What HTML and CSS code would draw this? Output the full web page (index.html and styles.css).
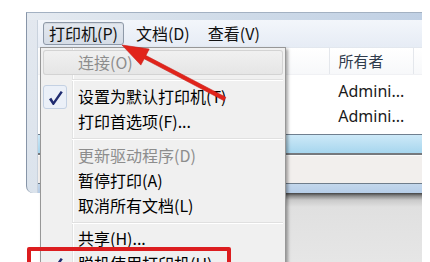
FILE: index.html
```html
<!DOCTYPE html>
<html lang="zh-CN">
<head>
<meta charset="utf-8">
<title>打印机</title>
<link rel="stylesheet" href="styles.css">
</head>
<body>
<div class="stage">
  <div class="window">
    <div class="client">
      <div class="menubar">
        <span class="mb-item active">打印机(P)</span>
        <span class="mb-item">文档(D)</span>
        <span class="mb-item">查看(V)</span>
      </div>
      <div class="list">
        <div class="lhead">
          <div class="col c1"></div>
          <div class="col c2"><span class="peek"></span></div>
          <div class="col c3">所有者</div>
          <div class="col c4"></div>
        </div>
        <div class="lbody">
          <div class="lrow">
            <div class="col c1"></div>
            <div class="col c2"></div>
            <div class="col c3">Admini...</div>
            <div class="col c4"></div>
          </div>
          <div class="lrow">
            <div class="col c1"></div>
            <div class="col c2"></div>
            <div class="col c3">Admini...</div>
            <div class="col c4"></div>
          </div>
        </div>
      </div>
      <div class="bands">
        <div class="b1"></div>
        <div class="b2"></div>
        <div class="b3"></div>
        <div class="b4"></div>
        <div class="b5"></div>
        <div class="b6"></div>
        <div class="b7"></div>
      </div>
    </div>
  </div>
  <div class="desk"></div>

  <div class="menu">
    <div class="mi hover disabled"><span class="mi-icon"></span><span class="mi-text">连接(O)</span></div>
    <div class="msep"></div>
    <div class="mi"><span class="mi-icon checked"><svg viewBox="0 0 22 22" width="22" height="22"><path d="M5 13.2 L7.3 11.8 L9.5 15.4 L16.7 5 L18.8 6.3 L9.9 19 L8.8 19 Z" fill="#1f2b70"/></svg></span><span class="mi-text">设置为默认打印机(T)</span></div>
    <div class="mi"><span class="mi-icon"></span><span class="mi-text">打印首选项(F)...</span></div>
    <div class="msep"></div>
    <div class="mi disabled"><span class="mi-icon"></span><span class="mi-text">更新驱动程序(D)</span></div>
    <div class="mi"><span class="mi-icon"></span><span class="mi-text">暂停打印(A)</span></div>
    <div class="mi"><span class="mi-icon"></span><span class="mi-text">取消所有文档(L)</span></div>
    <div class="msep short"></div>
    <div class="mi"><span class="mi-icon"></span><span class="mi-text">共享(H)...</span></div>
    <div class="mi"><span class="mi-icon plain"><svg viewBox="0 0 22 22" width="22" height="22"><path d="M5 13.2 L7.3 11.8 L9.5 15.4 L16.7 5 L18.8 6.3 L9.9 19 L8.8 19 Z" fill="#1f2b70"/></svg></span><span class="mi-text">脱机使用打印机(U)</span></div>
  </div>

  <div class="redbox"></div>

  <svg class="arrow" viewBox="0 0 430 262" width="430" height="262">
    <polygon points="122,45 149.2,49.1 145.9,55.5 225.8,97.2 224.2,100.8 144.2,58.8 140.8,65.1" fill="#e1241b" stroke="#c81a14" stroke-width="0.6" stroke-linejoin="round"/>
  </svg>
</div>
</body>
</html>
```

FILE: styles.css
```css
* {
  box-sizing: border-box;
}

html,
body {
  margin: 0;
  padding: 0;
  background: #fff;
}

body {
  font-family: "Noto Sans CJK SC", "Noto Sans", sans-serif;
  font-size: 16px;
  color: #000;
}

.stage {
  position: relative;
  width: 430px;
  height: 262px;
  overflow: hidden;
  background: #fff;
  padding-top: 12px;
}

/* window frame */
.window {
  margin-left: 26px;
  width: 396px;
  height: 181px;
  border-left: 1px solid #8795a8;
  border-top: 1px solid #a3b1c2;
  border-bottom-left-radius: 7px;
  background:
    linear-gradient(90deg, #e6ebf1 0, #d2dde9 45%, #c0d0e4 100%) top / 100% 7px no-repeat,
    linear-gradient(#e3e8ef, #dbe3ec);
  padding: 7px 0 0 10px;
  overflow: hidden;
}

.client {
  height: 173px;
  background: #fff;
  display: flex;
  flex-direction: column;
  border-left: 1px solid #c9d2dd;
}

.menubar {
  height: 28px;
  flex-shrink: 0;
  display: flex;
  align-items: center;
  gap: 6px;
  padding-left: 5px;
  background: linear-gradient(#f3f6fb, #e6ecf5);
  border-bottom: 1px solid #e2e7ee;
}

.mb-item {
  height: 23px;
  line-height: 21px;
  padding: 0 5px;
  border: 1px solid transparent;
  border-radius: 3px;
  color: #111;
  white-space: nowrap;
}

.mb-item.active {
  background: linear-gradient(#e4e9f0, #d5dce6);
  border-color: #8e99a8;
  box-shadow: inset 0 1px 1px rgba(0, 0, 0, 0.08);
}

/* list view */
.list {
  flex: 1;
  display: flex;
  flex-direction: column;
}

.lhead {
  height: 27px;
  display: flex;
  background: linear-gradient(#ffffff, #f7f8fa);
  border-bottom: 1px solid #f0f1f4;
  font-size: 15px;
  color: #2f3b4c;
  line-height: 26px;
}

.lbody {
  padding-top: 4px;
}

.lrow {
  height: 25px;
  display: flex;
  line-height: 25px;
  color: #1a1a1a;
}

.col {
  padding-left: 8px;
  white-space: nowrap;
  overflow: hidden;
}

.c1 {
  width: 212px;
}

.c2 {
  width: 85px;
  position: relative;
}

.peek {
  position: absolute;
  left: 38px;
  top: 9px;
  width: 2px;
  height: 9px;
  border-left: 1px dotted #9aa3ad;
}

.c3 {
  width: 85px;
  font-family: "Noto Sans", "Noto Sans CJK SC", sans-serif;
}

.lhead .c3 {
  font-family: "Noto Sans CJK SC", sans-serif;
}

.lhead .c3,
.lhead .c4 {
  border-left: 1px solid #e4e7ec;
}

.c4 {
  flex: 1;
}

.bands {
  height: 59px;
  flex-shrink: 0;
}

.b1 { height: 1px; background: #6f7f8f; }
.b2 { height: 18px; background: linear-gradient(#cde9f8, #a7d6ee); }
.b3 { height: 2px; background: #76797d; }
.b4 { height: 1px; background: #fbfbfb; }
.b5 { height: 27px; background: #f2efed; }
.b6 { height: 1px; background: #6f7d8b; }
.b7 { height: 9px; background: linear-gradient(#c3d7ec, #b6cde7); }

.desk {
  margin-left: 40px;
  width: 382px;
  height: 69px;
  background: linear-gradient(#434343 0, #8c8c8c 3px, #c9c9c9 7px, #e0e0e0 14px, #e6e6e6 100%);
}

/* popup menu */
.menu {
  position: absolute;
  left: 40px;
  top: 47px;
  width: 246px;
  height: 240px;
  padding: 2px;
  background: #f0f0f0;
  border: 1px solid #979797;
  box-shadow: 2px 2px 3px rgba(0, 0, 0, 0.35);
}

.menu::before {
  content: "";
  position: absolute;
  left: 31px;
  top: 0;
  bottom: 0;
  width: 1px;
  background: #e2e3e3;
  box-shadow: 1px 0 0 #fff;
}

.mi {
  position: relative;
  height: 25px;
  line-height: 25px;
  display: flex;
  align-items: center;
  border-radius: 3px;
  white-space: nowrap;
}

.mi.hover {
  background: linear-gradient(#f1f1f1, #e5e5e5);
  box-shadow: inset 0 0 0 1px #d3d3d3;
}

.mi.disabled {
  color: #8d8d8d;
}

.mi-icon {
  width: 24px;
  height: 24px;
  flex-shrink: 0;
  margin-right: 11px;
  display: flex;
  align-items: center;
  justify-content: center;
}

.mi-icon.checked {
  background: #ebf0f8;
  border: 1px solid #c4d1e3;
  border-radius: 3px;
}

.msep {
  position: relative;
  height: 9px;
}

.msep.short {
  height: 8px;
}

.msep::after {
  content: "";
  position: absolute;
  left: 29px;
  right: 0;
  top: 4px;
  height: 1px;
  background: #e0e0e0;
  box-shadow: 0 1px 0 #fff;
}

/* annotations */
.redbox {
  position: absolute;
  left: 27px;
  top: 247px;
  width: 204px;
  height: 40px;
  border: 4px solid #dc1d1f;
  border-radius: 2px;
}

.arrow {
  position: absolute;
  left: 0;
  top: 0;
}
```
